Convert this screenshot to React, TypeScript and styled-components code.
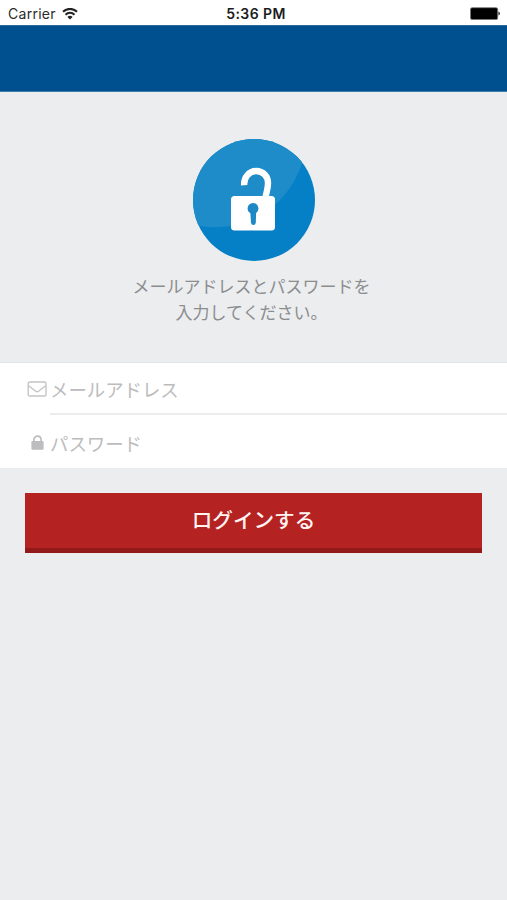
import React from "react";
import styled, { createGlobalStyle } from "styled-components";

const GlobalStyle = createGlobalStyle`
  * { box-sizing: border-box; }
  body {
    margin: 0;
    background: #ebedef;
    font-family: "Noto Sans CJK JP", sans-serif;
  }
`;

const Screen = styled.div`
  min-height: 900px;
  background: #ebedef;
`;

const StatusBar = styled.div`
  display: grid;
  grid-template-columns: 1fr auto 1fr;
  align-items: center;
  height: 25px;
  padding: 3px 7px 0 8px;
  background: #fff;
  color: #2b2b2b;
  font-family: Inter, sans-serif;
  font-size: 14px;
  line-height: 22px;
`;

const Carrier = styled.div`
  display: flex;
  align-items: center;
  gap: 6px;
  letter-spacing: 0.28px;
`;

const Time = styled.div`
  color: #1c1c1c;
  font-weight: 600;
  letter-spacing: 0.4px;
  padding-left: 4px;
`;

const Battery = styled.svg`
  justify-self: end;
  margin-top: -2px;
`;

const NavBar = styled.header`
  height: 67px;
  background: #00508f;
  border-top: 1px solid #2b6898;
  border-bottom: 1px solid #3e7cab;
`;

const Intro = styled.section`
  display: flex;
  flex-direction: column;
  align-items: center;
  height: 270px;
  padding-top: 47px;
`;

const Message = styled.p`
  margin: 12px 0 0;
  padding-right: 4px;
  color: #8b8d8f;
  font-size: 17px;
  line-height: 26px;
  text-align: center;
`;

const Fields = styled.div`
  height: 106px;
  background: #fff;
  border-top: 1px solid #e2e4e5;
`;

const Field = styled.label<{ $divider?: boolean }>`
  display: flex;
  align-items: center;
  height: ${(p) => (p.$divider ? "52px" : "53px")};
  padding: ${(p) => (p.$divider ? "0 0 1px 27px" : "2px 0 0 27px")};
  position: relative;

  &::after {
    content: "";
    display: ${(p) => (p.$divider ? "block" : "none")};
    position: absolute;
    left: 50px;
    right: 0;
    bottom: 0;
    height: 2px;
    background: #ececee;
  }
`;

const IconSlot = styled.span`
  display: flex;
  justify-content: center;
  width: 20px;
  margin-right: 3px;
`;

const Input = styled.input`
  flex: 1;
  min-width: 0;
  height: 40px;
  padding: 0;
  border: 0;
  outline: 0;
  background: transparent;
  color: #555;
  font: 18.4px "Noto Sans CJK JP", sans-serif;

  &::placeholder {
    color: #bcbcbe;
    opacity: 1;
  }
`;

const LoginButton = styled.button`
  display: block;
  width: calc(100% - 50px);
  height: 60px;
  margin: 25px 25px 0;
  padding: 0 0 2px;
  border: 0;
  border-bottom: 5px solid #921a1b;
  background: #b52222;
  color: #fff4f2;
  font: 500 20.6px/53px "Noto Sans CJK JP", sans-serif;
`;

const WifiIcon = () => (
  <svg width="16" height="13" viewBox="0 0 16 13" fill="none" stroke="#222">
    <path d="M1 3.8C4.9 -0.1 11.1 -0.1 15 3.8" strokeWidth="2" />
    <path d="M3.5 6.7C6 4.2 10 4.2 12.5 6.7" strokeWidth="2" />
    <path d="M5.4 8.9C7 7.5 9 7.5 10.6 8.9L8 11.6Z" fill="#222" stroke="none" />
  </svg>
);

const BatteryIcon = () => (
  <Battery width="30" height="13" viewBox="0 0 30 13">
    <rect x="0.5" y="0.7" width="27.2" height="11.8" rx="1.6" fill="#000" stroke="#777" strokeWidth="0.8" />
    <path d="M28.4 4.6Q30 5.2 30 6.6T28.4 8.6Z" fill="#333" />
  </Battery>
);

const UnlockBadge = () => (
  <svg width="122" height="122" viewBox="0 0 122 122">
    <defs>
      <clipPath id="disc">
        <circle cx="61" cy="61" r="61" />
      </clipPath>
    </defs>
    <g clipPath="url(#disc)">
      <rect width="122" height="122" fill="#0580c6" />
      <circle cx="22" cy="-2.7" r="91" fill="#1e8cc8" />
    </g>
    <path
      d="M51.2 46.2C50.6 38.5 56 32 63.2 32C70 32 75.2 37.3 75 44.5C74.8 50 73.4 54 72 60"
      fill="none"
      stroke="#fff"
      strokeWidth="6.4"
    />
    <rect x="38" y="57" width="44" height="34.5" rx="3.5" fill="#fff" />
    <circle cx="60" cy="69.4" r="5.4" fill="#1e88c5" />
    <path d="M57.2 71L58 83.5Q58.2 86 60.4 86T62.8 83.5L63.2 71Z" fill="#1e88c5" />
  </svg>
);

const MailIcon = () => (
  <svg width="20" height="16" viewBox="0 0 20 16" fill="none" stroke="#c5c5c7" strokeWidth="1.4" strokeLinejoin="round">
    <rect x="1.2" y="1" width="17.8" height="14" rx="1.6" />
    <path d="M1.6 4.8L8.7 10.2Q10.1 11.2 11.5 10.2L18.6 4.8" />
  </svg>
);

const LockIcon = () => (
  <svg width="13" height="16" viewBox="0 0 13 16">
    <path d="M2.9 8V4.8C2.9 -0.1 10.1 -0.1 10.1 4.8V8" fill="none" stroke="#bdbdbf" strokeWidth="1.7" />
    <rect x="0.4" y="6" width="12.2" height="8.7" rx="1" fill="#bdbdbf" />
  </svg>
);

export default function App() {
  return (
    <>
      <GlobalStyle />
      <Screen>
        <StatusBar>
          <Carrier>
            Carrier
            <WifiIcon />
          </Carrier>
          <Time>5:36 PM</Time>
          <BatteryIcon />
        </StatusBar>
        <NavBar />
        <Intro>
          <UnlockBadge />
          <Message>
            メールアドレスとパスワードを
            <br />
            入力してください。
          </Message>
        </Intro>
        <Fields>
          <Field $divider>
            <IconSlot>
              <MailIcon />
            </IconSlot>
            <Input type="email" placeholder="メールアドレス" />
          </Field>
          <Field>
            <IconSlot>
              <LockIcon />
            </IconSlot>
            <Input type="password" placeholder="パスワード" />
          </Field>
        </Fields>
        <LoginButton type="button">ログインする</LoginButton>
      </Screen>
    </>
  );
}
